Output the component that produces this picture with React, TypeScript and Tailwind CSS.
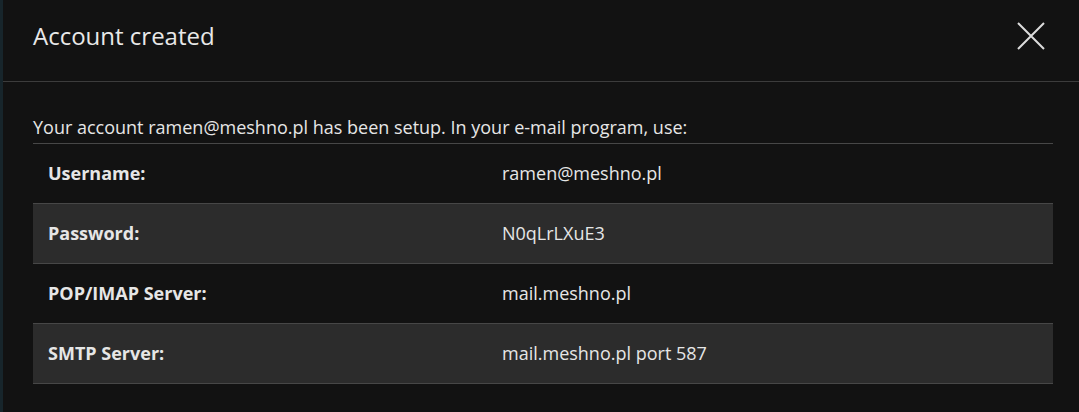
const rows = [
  { label: 'Username:', value: 'ramen@meshno.pl' },
  { label: 'Password:', value: 'N0qLrLXuE3' },
  { label: 'POP/IMAP Server:', value: 'mail.meshno.pl' },
  { label: 'SMTP Server:', value: 'mail.meshno.pl port 587' },
]

export default function App() {
  return (
    <div className="flex h-[412px] w-[1079px] bg-[#121212] text-[#e6e6e6]" style={{ fontFamily: '"Open Sans", "Noto Sans", sans-serif' }}>
      <div className="w-[3px] shrink-0 bg-[#17252b]" />
      <div className="flex-1">
        <div className="flex h-[82px] items-center justify-between border-b border-[#3c3c3c] pl-[30px] pr-[32px]">
          <h2 className="text-[24px] font-normal leading-none text-[#e8e8e8] pb-[10px]">Account created</h2>
          <button className="flex h-[40px] w-[40px] items-center justify-center pb-[10px] text-[#dcdcdc]">
            <svg width="28" height="28" viewBox="0 0 28 28" fill="none" stroke="currentColor" strokeWidth="2">
              <path d="M1 1L27 27M27 1L1 27" />
            </svg>
          </button>
        </div>
        <div className="px-[30px] pt-[33px]">
          <p className="text-[18px] leading-[24px] pb-[4px] text-[#e6e6e6]">
            Your account ramen@meshno.pl has been setup. In your e-mail program, use:
          </p>
          <table className="w-[1020px] border-collapse text-[18px]">
            <tbody>
              {rows.map((r, i) => (
                <tr key={r.label} className={`h-[60px] border-t border-b border-[#474747] ${i % 2 === 1 ? 'bg-[#2c2c2c]' : 'bg-[#121212]'}`}>
                  <td className="w-[454px] px-[15px] font-bold text-[#e6e6e6]">{r.label}</td>
                  <td className="px-[15px] text-[#e6e6e6]">{r.value}</td>
                </tr>
              ))}
            </tbody>
          </table>
        </div>
      </div>
    </div>
  )
}
